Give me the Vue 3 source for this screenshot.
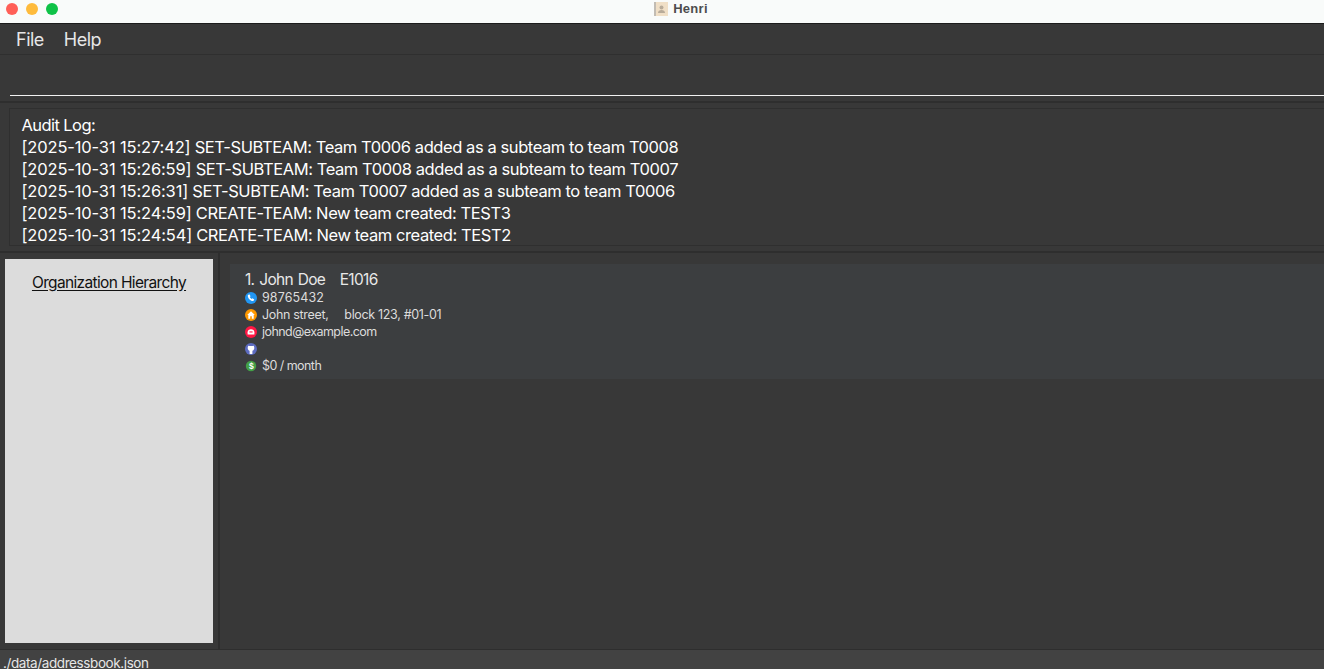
<script setup>
const logs = [
  ['[2025-10-31 15:27:42]', 'SET-SUBTEAM: Team T0006 added as a subteam to team T0008'],
  ['[2025-10-31 15:26:59]', 'SET-SUBTEAM: Team T0008 added as a subteam to team T0007'],
  ['[2025-10-31 15:26:31]', 'SET-SUBTEAM: Team T0007 added as a subteam to team T0006'],
  ['[2025-10-31 15:24:59]', 'CREATE-TEAM: New team created: TEST3'],
  ['[2025-10-31 15:24:54]', 'CREATE-TEAM: New team created: TEST2'],
]
</script>

<template>
  <div class="app">
    <header class="titlebar">
      <div class="lights">
        <span class="light red"></span>
        <span class="light amber"></span>
        <span class="light green"></span>
      </div>
      <div class="title">
        <svg class="title-icon" width="14" height="14" viewBox="0 0 14 14">
          <rect width="14" height="14" fill="#f0dfc6" />
          <rect width="2" height="14" fill="#c2bcb3" />
          <circle cx="7.500" cy="5.500" r="2" fill="#b8ab99" />
          <path d="M4 11c0-2 1.500-3 3.500-3s3.500 1 3.500 3z" fill="#b8ab99" />
        </svg>
        <span>Henri</span>
      </div>
    </header>

    <nav class="menubar">
      <span>File</span>
      <span>Help</span>
    </nav>

    <section class="command">
      <div class="command-input"></div>
    </section>

    <section class="result">
      <div class="result-box">
        <div class="log-line audit">Audit Log:</div>
        <div v-for="line in logs" :key="line[0]" class="log-line"><span class="stamp">{{ line[0] }}</span> {{ line[1] }}</div>
      </div>
    </section>

    <main class="content">
      <aside class="side">
        <div class="side-panel">
          <span class="side-title">Organization Hierarchy</span>
        </div>
      </aside>
      <section class="list">
        <article class="card">
          <div class="card-name">1. John Doe&nbsp;&nbsp; E1016</div>
          <div class="row">
            <svg class="ico" viewBox="0 0 12 12">
              <circle cx="6" cy="6" r="6" fill="#2196f3" />
              <path d="M2.800 3.300l1.500-1.100 1.300 2.100-.8.700c.3.800.9 1.500 1.800 1.900l.8-.7 1.900 1.400-1 1.500C5.700 9.400 2.700 6.500 2.800 3.300z" fill="#fff" />
            </svg>
            <span class="digits">98765432</span>
          </div>
          <div class="row">
            <svg class="ico" viewBox="0 0 12 12">
              <circle cx="6" cy="6" r="6" fill="#ff9800" />
              <path d="M6 2.300L2.200 6H3.300V9.700H5.200V7.300H6.800V9.700H8.700V6H9.800z" fill="#fff" />
            </svg>
            <span class="address">John street,&nbsp;&nbsp;&nbsp;&nbsp; block 123, #01-01</span>
          </div>
          <div class="row">
            <svg class="ico" viewBox="0 0 12 12">
              <circle cx="6" cy="6" r="6" fill="#ff1744" />
              <path d="M2.600 8.400V6.200C2.600 4.400 4.100 3.200 6 3.200S9.400 4.400 9.400 6.200V8.400z" fill="#fff" />
              <rect x="4.400" y="5.400" width="3.200" height="1.100" fill="#ff1744" />
            </svg>
            <span>johnd@example.com</span>
          </div>
          <div class="row">
            <svg class="ico" viewBox="0 0 12 12">
              <circle cx="6" cy="6" r="6" fill="#5c6bc0" />
              <path d="M2.700 4.800C2.700 4 3 3.300 3.300 2.700L4.500 3.100C5.400 2.800 6.600 2.800 7.500 3.100L8.700 2.700C9 3.300 9.300 4 9.300 4.800 9.300 6.500 8.400 7.500 7.400 7.800V11H4.600V7.800C3.600 7.500 2.700 6.500 2.700 4.800Z" fill="#fff" />
            </svg>
          </div>
          <div class="row">
            <svg class="ico" viewBox="0 0 12 12">
              <circle cx="6" cy="6" r="5.200" fill="#43a047" />
              <text x="6" y="8.800" text-anchor="middle" class="dollar">$</text>
            </svg>
            <span>$0 / month</span>
          </div>
        </article>
      </section>
    </main>

    <footer class="status">./data/addressbook.json</footer>
  </div>
</template>

<style>
html, body { margin: 0; padding: 0; background: #383838; overflow: hidden; }
</style>

<style scoped>
.app {
  width: 1324px;
  height: 669px;
  display: flex;
  flex-direction: column;
  overflow: hidden;
  background: #383838;
  font-family: Inter, "Liberation Sans", sans-serif;
  color: #fff;
}
.titlebar {
  height: 24px;
  box-sizing: border-box;
  flex: none;
  background: #f9fbfa;
  border-bottom: 1px solid #1c1c1c;
  position: relative;
  display: flex;
  align-items: center;
  justify-content: center;
}
.lights {
  position: absolute;
  left: 6px;
  top: 3px;
  display: flex;
  gap: 8px;
}
.light { width: 12px; height: 12px; border-radius: 50%; }
.red { background: #ff5f57; }
.amber { background: #febb3c; }
.green { background: #0fc247; }
.title {
  display: flex;
  align-items: center;
  gap: 5px;
  margin-top: -6px;
  margin-left: 38px;
  font-family: "Liberation Sans", sans-serif;
  font-size: 13px;
  font-weight: 700;
  color: #4d4d4d;
  letter-spacing: 0.3px;
}
.title-icon { flex: none; }
.menubar {
  height: 31px;
  box-sizing: border-box;
  flex: none;
  display: flex;
  align-items: center;
  gap: 20px;
  padding-left: 16px;
  font-size: 18px;
  letter-spacing: -0.5px;
  color: #e6e6e6;
  border-bottom: 1px solid #2f2f2f;
}
.command {
  height: 48px;
  flex: none;
  padding-left: 10px;
  display: flex;
  align-items: flex-end;
  box-sizing: border-box;
  padding-bottom: 5px;
  border-bottom: 2px solid #2e2e2e;
}
.command-input {
  flex: 1;
  height: 1px;
  background: #f2f2f2;
}
.result {
  height: 150px;
  flex: none;
  padding: 5px 0 4px 9px;
  box-sizing: border-box;
  border-bottom: 2px solid #2e2e2e;
}
.result-box {
  height: 138px;
  box-sizing: border-box;
  border: 1px solid #2f2f2f;
  border-right: none;
  padding: 5px 0 0 11.500px;
  overflow: hidden;
}
.log-line {
  height: 22px;
  line-height: 22px;
  font-size: 16.500px;
  letter-spacing: -0.42px;
  white-space: nowrap;
  color: #fff;
}
.audit { letter-spacing: -0.57px; }
.stamp { letter-spacing: -0.15px; }
.content {
  flex: 1;
  min-height: 0;
  display: flex;
}
.side {
  width: 220px;
  flex: none;
  padding: 6px 5px 6px;
  box-sizing: border-box;
  border-right: 2px solid #2e2e2e;
}
.side-panel {
  height: 100%;
  width: 208px;
  background: #dcdcdc;
  display: flex;
  justify-content: center;
  padding-top: 14px;
  box-sizing: border-box;
}
.side-title {
  align-self: flex-start;
  font-size: 15.500px;
  letter-spacing: -0.65px;
  line-height: 20px;
  color: #111;
  text-decoration: underline;
  text-underline-offset: 2px;
}
.list {
  flex: 1;
  min-width: 0;
  padding: 11px 0 0 10px;
}
.card {
  height: 115px;
  box-sizing: border-box;
  background: #3c3e40;
  padding: 6px 0 0 15px;
}
.card-name {
  font-size: 15.500px;
  line-height: 20px;
  letter-spacing: -0.7px;
  word-spacing: 1.200px;
  color: #e8e8e8;
  white-space: nowrap;
  height: 19px;
}
.row {
  height: 17px;
  display: flex;
  align-items: center;
  gap: 5px;
  font-size: 12.500px;
  letter-spacing: -0.55px;
  color: #dcdcdc;
  white-space: nowrap;
}
.digits { letter-spacing: 0.1px; }
.address { letter-spacing: -0.33px; }
.ico { width: 12px; height: 12px; flex: none; }
.dollar {
  font-size: 8.500px;
  font-weight: 700;
  fill: #fff;
  font-family: "Liberation Sans", sans-serif;
}
.status {
  height: 20px;
  flex: none;
  box-sizing: border-box;
  background: #424242;
  border-top: 1px solid #2e2e2e;
  padding: 3px 0 0 3px;
  font-size: 13.500px;
  line-height: 20px;
  letter-spacing: -0.4px;
  color: #e6e6e6;
  white-space: nowrap;
  overflow: hidden;
}
</style>
